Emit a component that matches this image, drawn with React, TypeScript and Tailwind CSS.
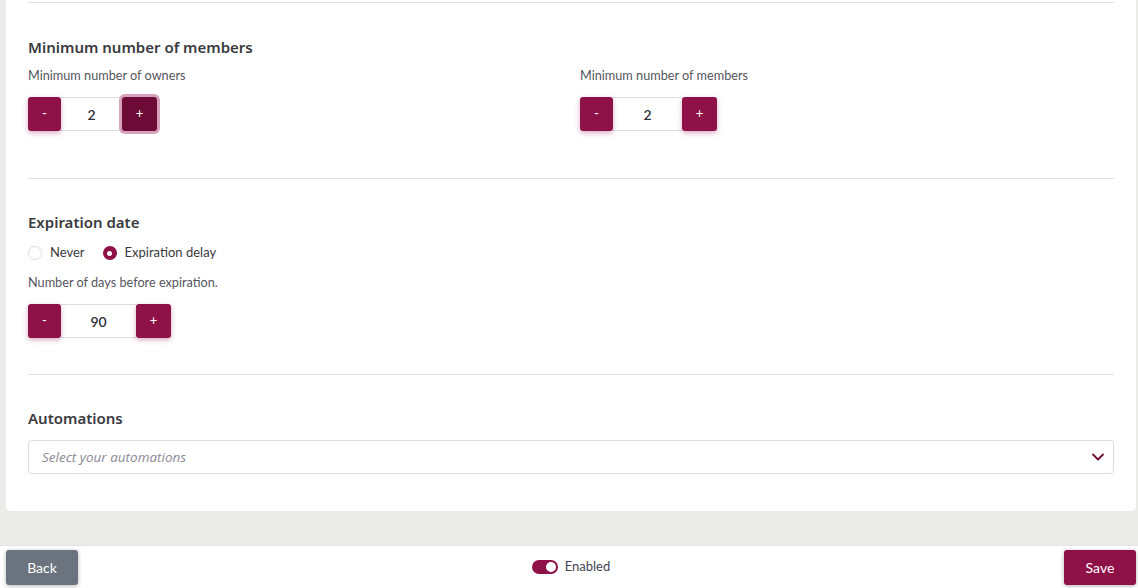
import { ChevronDown } from "lucide-react";

function Stepper({ value, inputW, focused }: { value: string; inputW: string; focused?: boolean }) {
  return (
    <div className="flex items-center h-[34px]">
      <button className="w-[33px] h-[34px] bg-[#8e1148] text-white text-[13px] rounded-[3px] shadow-[0_2px_5px_rgba(142,17,72,0.35)] z-10">
        -
      </button>
      <div
        className={`${inputW} h-[34px] border-y border-[#dcdce2] bg-white flex items-center justify-center text-[14px] text-[#2f2f3a] font-semibold`}
      >
        {value}
      </div>
      {focused ? (
        <button className="w-[35px] h-[34px] bg-[#6d0b36] text-white text-[13px] rounded-[3px] ring-[3px] ring-[#d7a2bb] z-10">
          +
        </button>
      ) : (
        <button className="w-[35px] h-[34px] bg-[#8e1148] text-white text-[13px] rounded-[3px] shadow-[0_2px_5px_rgba(142,17,72,0.35)] z-10">
          +
        </button>
      )}
    </div>
  );
}

export default function App() {
  return (
    <div className="w-[1138px] h-[588px] bg-[#ebebea] flex flex-col overflow-hidden font-['Lato','Noto_Sans',sans-serif]">
      {/* Card */}
      <div className="ml-[6px] mr-[2px] bg-white rounded-b-[5px] px-[22px] pt-[2px] pb-[37px]">
        <div className="border-t border-[#e2dfe8]" />

        {/* Minimum number of members */}
        <div className="pt-[34px]">
          <h2 className="font-['Noto_Sans',sans-serif] text-[15px] leading-[20px] font-semibold text-[#3a3a40]">
            Minimum number of members
          </h2>
          <div className="grid grid-cols-2 gap-[18px] mt-[10px]">
            <div>
              <div className="text-[12.7px] leading-[16px] text-[#55555e]">Minimum number of owners</div>
              <div className="mt-[14px]">
                <Stepper value="2" inputW="w-[61px]" focused />
              </div>
            </div>
            <div>
              <div className="text-[12.7px] leading-[16px] text-[#55555e]">Minimum number of members</div>
              <div className="mt-[14px]">
                <Stepper value="2" inputW="w-[69px]" />
              </div>
            </div>
          </div>
        </div>

        <div className="border-t border-[#e2dfe8] mt-[47px]" />

        {/* Expiration date */}
        <div className="pt-[33px]">
          <h2 className="font-['Noto_Sans',sans-serif] text-[15px] leading-[20px] font-semibold text-[#3a3a40]">
            Expiration date
          </h2>
          <div className="flex items-center mt-[11px] h-[20px] text-[13px] text-[#3a3a40]">
            <span className="w-[14px] h-[14px] rounded-full border border-[#dcdce2] bg-white" />
            <span className="ml-[8px]">Never</span>
            <span className="ml-[18px] w-[14px] h-[14px] rounded-full bg-[#8e1148] flex items-center justify-center">
              <span className="w-[5px] h-[5px] rounded-full bg-white" />
            </span>
            <span className="ml-[8px]">Expiration delay</span>
          </div>
          <div className="mt-[11px] text-[12.7px] leading-[16px] text-[#55555e]">Number of days before expiration.</div>
          <div className="mt-[14px]">
            <Stepper value="90" inputW="w-[75px]" />
          </div>
        </div>

        <div className="border-t border-[#e2dfe8] mt-[36px]" />

        {/* Automations */}
        <div className="pt-[33px]">
          <h2 className="font-['Noto_Sans',sans-serif] text-[15px] leading-[20px] font-semibold text-[#3a3a40]">
            Automations
          </h2>
          <div className="mt-[12px] h-[34px] border border-[#dcdce2] rounded-[4px] flex items-center justify-between pl-[13px] pr-[5px]">
            <span className="font-['Open_Sans',sans-serif] italic text-[13.5px] text-[#8a8a94]">Select your automations</span>
            <ChevronDown className="w-[20px] h-[20px] text-[#6d0b36]" strokeWidth={2.2} />
          </div>
        </div>
      </div>

      <div className="flex-1" />

      {/* Footer */}
      <div className="h-[43px] bg-white border-t border-[#e4e4e4] flex items-center justify-between pl-[6px] pr-[2px]">
        <button className="w-[72px] h-[35px] bg-[#6b737e] text-white text-[14px] leading-[33px] rounded-[3px] shadow-[0_1px_4px_rgba(0,0,0,0.3)]">
          Back
        </button>
        <div className="flex items-center">
          <span className="w-[26px] h-[14px] rounded-full bg-[#8e1148] flex items-center justify-end pr-[2px]">
            <span className="w-[10px] h-[10px] rounded-full bg-white" />
          </span>
          <span className="ml-[7px] text-[13px] text-[#444450]">Enabled</span>
        </div>
        <button className="w-[72px] h-[35px] bg-[#8e1148] text-white text-[14px] leading-[33px] rounded-[3px] shadow-[0_1px_4px_rgba(0,0,0,0.3)]">
          Save
        </button>
      </div>
    </div>
  );
}
